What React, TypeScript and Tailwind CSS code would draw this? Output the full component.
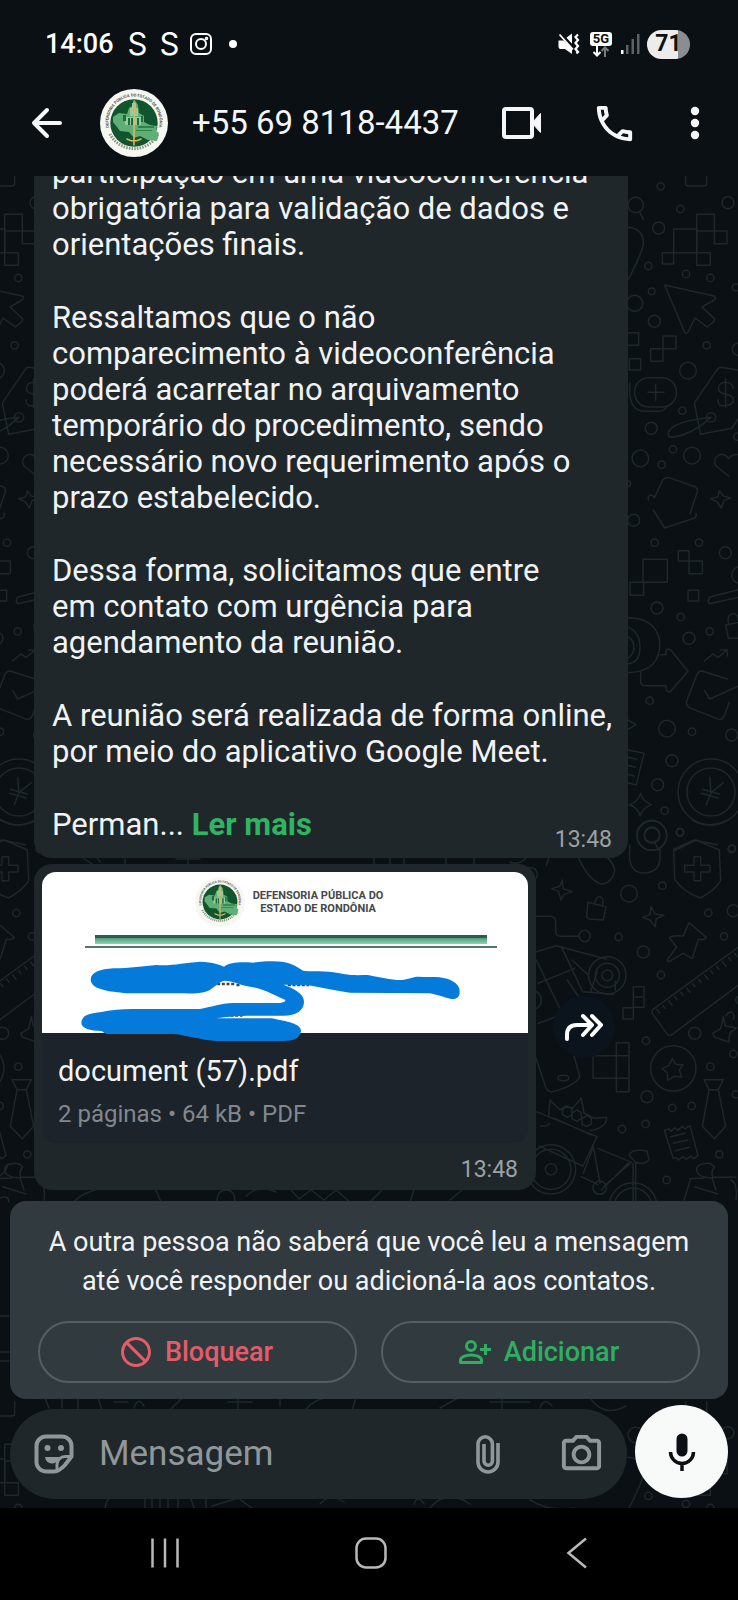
import React, { useId } from "react";
import { MdBlock, MdOutlineCall, MdOutlinePhotoCamera } from "react-icons/md";

const paragraphs: string[][] = [
  ["participação em uma videoconferência", "obrigatória para validação de dados e", "orientações finais."],
  [
    "Ressaltamos que o não",
    "comparecimento à videoconferência",
    "poderá acarretar no arquivamento",
    "temporário do procedimento, sendo",
    "necessário novo requerimento após o",
    "prazo estabelecido.",
  ],
  ["Dessa forma, solicitamos que entre", "em contato com urgência para", "agendamento da reunião."],
  ["A reunião será realizada de forma online,", "por meio do aplicativo Google Meet."],
];

type Dot = [number, number, number];

const upperDots: Dot[] = [
  [182, 49, 11], [107, 105, 23], [241, 117, 11], [384, 98, 18], [176, 174, 18], [145, 288, 11],
  [258, 312, 11], [331, 324, 11], [155, 364, 10], [104, 400, 24], [163, 454, 18], [320, 526, 11],
  [264, 602, 25], [408, 352, 11], [415, 538, 18], [247, 722, 11], [154, 775, 18], [121, 865, 25],
  [219, 838, 11], [276, 857, 25], [185, 884, 11], [84, 941, 8], [412, 800, 11], [333, 742, 14],
];

const middleDots: Dot[] = [
  [101, 31, 18], [164, 98, 11], [297, 98, 11], [376, 128, 18], [420, 195, 25], [171, 294, 18],
  [242, 321, 11], [267, 385, 18], [329, 364, 11], [149, 572, 11], [201, 656, 25], [276, 665, 11],
  [395, 675, 18], [216, 752, 18], [173, 824, 18], [194, 902, 11], [240, 966, 11], [333, 846, 99],
  [333, 846, 72], [155, 976, 45], [156, 974, 23], [396, 1015, 10],
];

const lowerDots: Dot[] = [
  [936, 37, 11], [1091, 87, 11], [883, 197, 11], [783, 221, 25], [1021, 279, 11], [1096, 272, 18],
  [650, 348, 17], [752, 351, 11], [1068, 349, 11], [826, 396, 18], [879, 465, 11], [718, 466, 56],
  [718, 466, 36], [718, 466, 16], [980, 640, 18], [834, 662, 11], [1096, 702, 11], [916, 745, 68],
  [1027, 740, 11], [837, 830, 18], [913, 864, 11], [971, 858, 11], [833, 912, 11], [762, 927, 11],
  [1054, 1003, 11], [896, 1080, 11], [1104, 823, 11], [549, 1048, 74], [549, 1048, 60], [549, 1048, 17],
  [695, 1103, 20], [795, 1160, 72], [795, 1160, 56], [490, 540, 30], [488, 163, 20],
];

function Dots({ items }: { items: Dot[] }) {
  return (
    <>
      {items.map(([cx, cy, r]) => (
        <circle key={`${cx}-${cy}-${r}`} cx={cx} cy={cy} r={r} />
      ))}
    </>
  );
}

function DoodleColumn() {
  return (
    <>
      <g transform="translate(600 -6) scale(0.33333)">
        <Dots items={upperDots} />
        <path d="M257 5v35q0 8 8 8h47q8 0 8-8V5M120 128l10 20" />
        <path d="M221 177h70v71h-70zM290 133h53v50h-53zM343 183h38v38h-38zM187 248h34v34h-34zM290 183v103h41v-38h-41" />
        <path d="M84 172q48 5 46 50q-5 30-46 108" />
        <path d="M194 345L345 379q4 5-3 11l-36 21 37 35q3 5-3 10l-18 15-37-27-22 45q-4 3-8 0z" />
        <path d="M80 488h36v38H80zM88 566h34v34H88zM189 498h39v38h-39zM152 536h37v38h-37z" />
        <rect x="104" y="623" width="125" height="88" rx="42" />
        <path d="M90 640q-8 84 45 84h40q18 0 27-16M144 667h48M167 643v48" />
        <path d="M414 600l-50-8q-8 0-12 6l-66 96q-3 5-2 10l18 89 94-18 18-28M333 742Q215 755 205 788q-2 14 12 14q60-8 116-60" />
        <path d="M400 655q-4-18-23-18t-22 18q0 14 22 18t23 17-23 17-23-18M377 626v86" />
        <path d="M386 918L348 888q-8-12 0-26 19-20 38 4 10-14 28-12M145 990q-2-12 6-14 10-2 12 8l26-55q8-8 18-6l80 28q6 4 5 14l-22 66M358 962l12 16 22 6-20 8-8 22-12-18-20-10 22-6z" />
      </g>
      <g transform="translate(600 334) scale(0.33333)">
        <Dots items={middleDots} />
        <path d="M160 0l34 54 90-30q8-8 4-14M129 148h73v69h-73zM90 217h41v39H90zM235 122h32v31h-32zM267 153h40v38h-40zM264 241h32v32h-32z" />
        <path d="M420 238l-90 23q-9 8-2 20l92-20M385 338q-4-24 12-27t17 20M377 345l40-8M377 345l8 40h35" />
        <path d="M80 323q84-2 99 68 6 96-99 97M80 350q40 14 40 62t-40 50M80 378q22 12 22 34t-22 36" />
        <path d="M122 485v32q2 10 12 10h64v10q6 12 14 7l52-60-52-64q-8-6-14 2v12h-18" />
        <path d="M313 453l26-21 15 10 28-22M362 420h20v18M382 507l-76-24q-10 0-16 12l-31 82q2 14 14 18l85 34q12-2 16-14l14-38M314 542l15 25 90-40" />
        <path d="M84 720l48 10-23 94-29-6M84 742l26 6M80 766l26 6M78 792l24 6M84 630l24 14-24 14" />
        <path d="M329 802l4 46-14 36M370 818l-37 30M308 838l50 14M304 850l50 14M122 850q6 24 32 34-26 10-34 34-6-26-32-34 28-10 34-34M165 1000l12 20M220 1018l62-28 70 14" />
      </g>
      <g transform="translate(368 644) scale(0.33333)">
        <Dots items={lowerDots} />
        <circle cx="852" cy="47" r="44" />
        <circle cx="852" cy="47" r="23" />
        <path d="M785 75v42q5 44 48 42 44-5 43-48V84M630 110q30 70 70 82 36-4 40-44-8-28-30-40M545 108l-10 28M973 0q50 30 105 0" />
        <path d="M917 93l67-33 70 30 4 92q-14 26-60 52-50-16-78-56z" />
        <path d="M978 110h20v26h28v20h-28v26h-20v-26h-28v-20h28z" />
        <path d="M583 180l2 26 28 9-26 9-8 16-8-26-20-8 24-7zM849 260l12 22 27 4-23 10-4 24-15-20-22-8 22-8z" />
        <path d="M660 247l54 13-8 40-42-3q-10-3-8-12zM680 252q4-26 16-22 12 2 8 28" />
        <path d="M505 289h40q18 0 18 18v26q0 16 16 16h54M505 395l60-18 150 40M580 380l64 135 92 8M505 420l80 165 50 185q-10 26-84 46-14-2-18-14l-30-90M510 490l110-45M510 610q62-20 92-40h38M598 480l40 60M668 515l20-60M742 512v-28M612 420l50 46" />
        <path d="M963 308l52 44q-4 10-24 6l-18 58-28-16-40 24q-8 2-6-6l27-37-22-28q6-8 42-5z" />
        <path d="M1120 375L855 568q-6 8 0 16l44 60q8 4 14-1l207-154M866 568l9 11M884 556l7 9M902 543l10 13M920 530l7 9M938 517l7 9M956 504l10 13M974 491l7 9M992 478l7 9M1010 465l10 13M1028 452l7 9M1046 439l7 9M1064 426l10 13M1082 413l7 9M1100 400l7 9" />
        <path d="M796 500h32v62h-32zM796 531h32M765 563h31v34h-31zM675 707h108v68H675zM745 668h38v147h-38z" />
        <path d="M1066 590l6 28 34 6-20 14-4 28-42-14-6-12 24-14zM1074 588q8-16 20-10 8 8 2 20M1108 530l-6 10 8 12" />
        <path d="M913 716l10 17 22 1-11 16 7 22-22-3-20 12-1-22-16-14 20-8z" />
        <path d="M1008 779h58l-15 30h-28zM1023 809l-20 110 36 37 34-37-22-110" />
        <path d="M889 931l14-4 6 7 12-11 8 8 14-12 8 8 15-10 24 90-13 9-8-8-15 10-8-8-16 10-6-8-8 4zM908 950l44-10M916 970l44-10M922 992l42-10" />
        <ellipse cx="586" cy="774" rx="16" ry="8" />
        <path d="M505 875l182 75-42 88-132-60M560 895l110 50M546 840l-4 46M546 840l30 30 18-12 18 8 28-32 8 45 32 16 36-3q2 30-50 40M584 868l14-10 14 8v18l-14 8-14-8zM612 880l14-10 14 8v18l-14 8-14-8zM642 896l14-10 14 8v18l-14 8-14-8z" />
        <path d="M676 980l20 110M690 985l100 42-80 70M640 1070l50 24M676 980l-30 80M795 1030v130M803 1030v130M783 1005q10-20 54-12l6 26q-14 16-40 8zM545 910q-4 10-28 8M700 1110l80-80" />
        <path d="M1104 1072h-70q-6-22 6-30-14-18-34-10-22 2-20 20 2 14 26 20l20 2 12 36M1008 1074l-40 2-20 64M980 1100l70 22M1088 1080q22 8 16 60" />
      </g>
    </>
  );
}

function Wallpaper() {
  return (
    <svg
      aria-hidden="true"
      className="absolute inset-0 h-full w-full"
      fill="none"
      stroke="#1f272b"
      strokeWidth="4.5"
      strokeLinecap="round"
      strokeLinejoin="round"
    >
      <defs>
        <g id="doodles">
          <DoodleColumn />
        </g>
      </defs>
      <use href="#doodles" />
      <use href="#doodles" x="-692" />
      <use href="#doodles" y="1230" />
      <use href="#doodles" x="-692" y="1230" />
      <g strokeWidth="1.5">
        <path d="M80 680l12 8M96 680l4 6M125 680v8M176 683h24M188 680v8M374 680v8M390 680v8M404 680v8M446 680v8M474 680v8M510 686q8 4 16-4" />
        <path d="M74 1026q8-10 30-14M155 1012l6 14M217 1026q0-12 9-12t9 12M246 1020q12-12 30-4M291 1014l8 9 12-9 13 10 12-10 14 12M370 1026l12-12M410 1026l4-12M450 1024l12-10" />
        <path d="M45 1222l4 10M62 1222v10M78 1222v12M98 1222l4 12M114 1226h14M134 1232q4-12 10-2M170 1234l12-12M228 1226h24M238 1222v12M280 1222v8M305 1234q12-14 28-12M352 1234l4-12M440 1232l18-10M490 1226h40M502 1222v12M540 1232q4-12 12-2M590 1222q14 20 36 8" />
        <path d="M105 1332q2-16 20-12M145 1322v10M152 1320v12M160 1320v12M168 1322v10M178 1320v12M190 1320l4 12M206 1322v10M212 1330l26-8 14 10M320 1328q10-12 24-2M414 1328q4-10 10 0M430 1332q16-20 40-4M530 1324q20 12 44 8" />
        <path d="M0 1022q8-4 9 4M0 1140h9M0 1176h9M0 1185h9M0 1000q6-4 8-12" />
      </g>
    </svg>
  );
}

function Seal({ className }: { className: string }) {
  const arcId = useId();
  return (
    <svg viewBox="0 0 68 68" className={className} role="img" aria-label="Defensoria Pública do Estado de Rondônia">
      <defs>
        <path id={arcId} d="M9.5 40A25.5 25.5 0 1 1 58.500 40" />
      </defs>
      <circle cx="34" cy="34" r="34" fill="#f7f7f1" />
      <text fontSize="4" fontWeight="700" fill="#4b5148" fontFamily="Roboto, sans-serif">
        <textPath href={`#${arcId}`} startOffset="50%" textAnchor="middle">
          DEFENSORIA PÚBLICA DO ESTADO DE RONDÔNIA
        </textPath>
      </text>
      <path d="M10 45A27 27 0 0 0 58 45" fill="none" stroke="#8b9480" strokeWidth="3" strokeDasharray="1.500 1.200" />
      <circle cx="34" cy="34" r="23.700" fill="#10552d" />
      <path d="M13 28l6-4 8 1 2-6 3-2 2-7 4 6 1 8 5 3v6l6 3 7 1-1 5 3 2-2 8-9-1-8-4-6 2-5-6-9-1-3-4-4-5z" fill="#5fae76" />
      <path d="M25 28h16v8H25zM30 19h8v8h-8zM32 14h4v5h-4z" fill="#93cca0" />
      <path d="M23 26h3v6h-3zM28 29h2v7h-2zM31 29h2v7h-2zM37 29h2v7h-2zM41 27h2v6h-2z" fill="#1f6b3c" />
      <path d="M38 37h16v2H38zM36 41h16v1H36z" fill="#2e834b" />
      <path d="M34 13v43M27 50q7 4 14 0M31 22h6" fill="none" stroke="#d9b565" strokeWidth="1.600" strokeLinecap="round" />
    </svg>
  );
}

function StatusBar() {
  return (
    <div className="flex h-[88px] items-center justify-between pl-[45px] pr-12 text-white">
      <div className="flex items-center">
        <span className="text-[27px] font-medium leading-8">14:06</span>
        <span className="ml-[14px] font-[Inter,sans-serif] text-[31px] leading-8">S</span>
        <span className="ml-3 font-[Inter,sans-serif] text-[31px] leading-8">S</span>
        <svg viewBox="0 0 24 24" className="ml-[10px] size-6" fill="none" stroke="currentColor" strokeWidth="2">
          <rect x="2" y="2" width="20" height="20" rx="5" />
          <circle cx="12" cy="12" r="5" />
          <circle cx="17.500" cy="6.500" r="0.800" />
        </svg>
        <span className="ml-4 size-2 rounded-full bg-white" />
      </div>
      <div className="flex items-center">
        <svg viewBox="0 0 22 22" className="size-[22px]" fill="currentColor">
          <path d="M0.500 7.500h5L14 14.500V21l-7-5H2.500Q.5 16 .5 13zM8 5l6-4.500V11z" />
          <path d="M3 0l14 16" stroke="#0a1014" strokeWidth="2" />
          <path d="M1.500 1.500L15 16.500" stroke="currentColor" strokeWidth="1.800" />
          <path d="M20 1.500l-2.500 2.500 2.500 3-2.500 3 2.500 3-2.500 3 2.500 3-1.500 1.500" fill="none" stroke="currentColor" strokeWidth="2.200" />
        </svg>
        <div className="ml-[10px] flex flex-col items-center">
          <span className="rounded-[3px] bg-white px-[3px] text-[13px] font-bold leading-[14px] text-[#0a1014]">5G</span>
          <svg viewBox="0 0 18 11" className="h-[11px] w-[18px]" fill="none" strokeWidth="2">
            <path d="M5 0v9M1.500 6L5 9.500 8.500 6" stroke="#fff" />
            <path d="M13 11V2M9.500 5L13 1.500 16.500 5" stroke="#777b7d" />
          </svg>
        </div>
        <svg viewBox="0 0 20 20" className="ml-2 size-5">
          <path d="M1 16h2.500v4H1z" fill="#fff" />
          <path d="M6 11h2.500v9H6zM11.500 5H14v15h-2.500zM17 0h2.500v20H17z" fill="#5d6265" />
        </svg>
        <div className="ml-[7px] flex h-[29px] w-[43px] items-center justify-center rounded-full bg-linear-to-r from-[#ececec] from-71% to-[#8b8e90] to-71% text-[23px] font-bold leading-7 text-[#0a1014]">
          71
        </div>
      </div>
    </div>
  );
}

function ChatHeader() {
  return (
    <div className="flex h-[88px] items-start pl-[30px] pr-[38px] text-[#f4f6f7]">
      <button type="button" aria-label="Voltar" className="flex h-[70px] w-[34px] items-center">
        <svg viewBox="0 0 34 34" className="size-[34px]" fill="none" stroke="currentColor" strokeWidth="4" strokeLinecap="round" strokeLinejoin="round">
          <path d="M30 17H4M17 4L4 17l13 13" />
        </svg>
      </button>
      <Seal className="ml-9 mt-px size-[68px] shrink-0" />
      <h1 className="ml-6 flex h-[70px] flex-1 items-center whitespace-nowrap text-[33px] font-normal leading-10">
        +55 69 8118-4437
      </h1>
      <div className="flex h-[70px] items-center">
        <button type="button" aria-label="Chamada de vídeo">
          <svg viewBox="0 0 40 32" className="h-8 w-10" fill="none" stroke="currentColor" strokeWidth="4" strokeLinejoin="round">
            <rect x="2" y="2" width="28" height="28" rx="2" />
            <path d="M30 16l8.500-9.500v19z" fill="currentColor" strokeWidth="1" />
          </svg>
        </button>
        <button type="button" aria-label="Ligar" className="ml-[49px]">
          <MdOutlineCall className="size-[47px]" />
        </button>
        <button type="button" aria-label="Mais opções" className="ml-[52px]">
          <svg viewBox="0 0 10 34" className="h-[34px] w-[10px]" fill="currentColor">
            <circle cx="5" cy="5" r="4.200" />
            <circle cx="5" cy="17" r="4.200" />
            <circle cx="5" cy="29" r="4.200" />
          </svg>
        </button>
      </div>
    </div>
  );
}

function TextMessage() {
  return (
    <article className="w-[594px] max-w-full rounded-[18px] bg-[#20272a] pb-[15px] pl-[18px] pr-4 pt-2 text-[31px] leading-9 text-[#f1f3f4]">
      {paragraphs.map((lines) => (
        <p key={lines[0]} className="mb-[37px] whitespace-nowrap">
          {lines.map((line) => (
            <span key={line} className="block">
              {line}
            </span>
          ))}
        </p>
      ))}
      <div className="flex items-end justify-between">
        <p>
          Perman...{" "}
          <a href="#mais" className="font-bold text-[#2eb564]">
            Ler mais
          </a>
        </p>
        <time className="-mb-[11px] text-[23px] leading-7 text-[#9ba1a4]">13:48</time>
      </div>
    </article>
  );
}

function DocumentMessage() {
  return (
    <article className="w-[502px] rounded-[18px] bg-[#20272a] px-2 pb-1 pt-2">
      <div className="overflow-hidden rounded-[14px] bg-[#1c232a]">
        <div className="relative h-[161px] bg-white">
          <div className="flex items-center justify-center gap-2 pl-2 pt-[5px]">
            <Seal className="size-[50px]" />
            <p className="text-center text-[11px] font-bold leading-[13px] text-[#45484a]">
              DEFENSORIA PÚBLICA DO
              <br />
              ESTADO DE RONDÔNIA
            </p>
          </div>
          <div className="ml-[43px] mr-[31px] mt-2 border-b-2 border-[#54736b] px-[10px] pb-[2px]">
            <div className="h-[9px] border-t-[3px] border-[#2c5b4b] bg-linear-to-b from-[#4f9d7b] to-[#8fd3b2]" />
          </div>
          <svg viewBox="126 36 1455 483" className="absolute inset-0 h-full w-full overflow-visible" aria-hidden="true">
            <path d="M650 372h56M708 375h10M862 375h64M690 466h36" stroke="#4b3f3a" strokeWidth="8" strokeDasharray="9 5" />
          </svg>
        </div>
        <div className="flex h-[110px] flex-col pl-4 pt-5">
          <h2 className="text-[29px] font-normal leading-9 text-[#f1f3f4]">document (57).pdf</h2>
          <p className="mt-[11px] text-[24px] leading-7 text-[#82888c]">2 páginas • 64 kB • PDF</p>
        </div>
      </div>
      <div className="flex justify-end pr-[10px] pt-[11px]">
        <time className="text-[23px] leading-8 text-[#9ba1a4]">13:48</time>
      </div>
    </article>
  );
}

function Scribble() {
  return (
    <svg viewBox="126 36 1455 483" className="pointer-events-none absolute left-2 top-2 h-[161px] w-[485px] overflow-visible" aria-hidden="true">
      <path
        fill="#047bdb"
        fillRule="nonzero"
        d="M272 358C275 335 300 328 340 325C390 325 430 318 470 315C520 318 550 308 600 305C640 306 660 315 672 320C690 306 720 306 760 308C800 303 850 300 880 315C900 325 905 332 915 333C950 335 990 332 1030 342C1060 347 1080 345 1104 345C1140 352 1170 360 1204 360C1225 358 1238 350 1254 350C1280 351 1300 350 1319 352C1350 356 1380 370 1379 395C1379 410 1370 418 1354 417C1330 412 1310 402 1284 400L1050 398C1000 392 960 380 920 376L850 374C880 385 912 400 912 425C912 450 890 467 850 467H740C700 468 665 472 650 475H815C860 485 903 490 903 513C900 535 880 543 850 543H650C600 540 560 525 520 522H320C310 518 308 515 305 513C270 512 244 505 244 488C246 465 270 460 300 457C340 447 380 446 420 447H600C640 440 660 430 700 429H840C850 428 857 425 856 420C830 410 790 385 750 380C720 376 700 362 672 362C650 370 640 385 625 392C600 402 570 400 540 400H380C330 395 272 390 272 358Z"
      />
    </svg>
  );
}

function ContactNotice() {
  return (
    <section className="rounded-[16px] bg-[#313a3f] px-7 pb-4 pt-[22px]">
      <p className="whitespace-nowrap text-center text-[27px] leading-[39px] text-[#f1f3f4]">
        A outra pessoa não saberá que você leu a mensagem
        <br />
        até você responder ou adicioná-la aos contatos.
      </p>
      <div className="mt-5 grid grid-cols-2 gap-6">
        <button type="button" className="flex h-[62px] items-center justify-center gap-[11px] rounded-full border-2 border-[#555e63] pr-1 text-[27px] font-medium text-[#e55c69]">
          <MdBlock className="size-9 -scale-x-100" />
          Bloquear
        </button>
        <button type="button" className="flex h-[62px] items-center justify-center gap-3 rounded-full border-2 border-[#555e63] pr-1 text-[27px] font-medium text-[#2fae62]">
          <svg viewBox="0 0 34 24" className="h-6 w-[34px]" fill="none" stroke="currentColor" strokeWidth="3">
            <circle cx="13" cy="6" r="4.500" />
            <path d="M2.500 22.500V20C2.500 17 8 15 13 15s10.500 2 10.500 5v2.500z" strokeLinejoin="round" />
            <path d="M27.500 4v11M22 9.500h11" />
          </svg>
          Adicionar
        </button>
      </div>
    </section>
  );
}

function Composer() {
  return (
    <form className="flex items-start gap-2" onSubmit={(event) => event.preventDefault()}>
      <div className="mt-1 flex h-[90px] min-w-0 flex-1 items-center rounded-full bg-[#20272a] pl-6 pr-[22px] text-[#8f979a]">
        <button type="button" aria-label="Figurinhas">
          <svg viewBox="0 0 40 40" className="size-10" fill="none" stroke="currentColor" strokeWidth="4" strokeLinejoin="round">
            <path d="M12 2.500h16A9.500 9.500 0 0 1 37.500 12v10.500L31 31Q25 37.500 20 37.500H12A9.500 9.500 0 0 1 2.500 28.500V12A9.500 9.500 0 0 1 12 2.500z" />
            <path d="M37 22.500h-6a8 8 0 0 0-8 8V37" strokeWidth="3" />
            <circle cx="13.500" cy="14" r="3" fill="currentColor" stroke="none" />
            <circle cx="27" cy="14" r="3" fill="currentColor" stroke="none" />
            <path d="M11 23h14q-2 7-7 6.500-6-.5-7-6.500z" fill="currentColor" stroke="none" />
          </svg>
        </button>
        <input
          type="text"
          aria-label="Mensagem"
          placeholder="Mensagem"
          className="ml-[25px] min-w-0 flex-1 bg-transparent text-[35px] leading-10 outline-none placeholder:text-[#8f979a]"
        />
        <button type="button" aria-label="Anexar">
          <svg viewBox="0 0 26 40" className="h-10 w-[26px]" fill="none" stroke="currentColor" strokeWidth="3.600">
            <path d="M23 9v19a10 10 0 0 1-20 0V10a7.200 7.200 0 0 1 14.400 0v17a4.200 4.200 0 0 1-8.400 0V10" />
          </svg>
        </button>
        <button type="button" aria-label="Câmera" className="ml-[57px]">
          <MdOutlinePhotoCamera className="size-[47px]" />
        </button>
      </div>
      <button type="button" aria-label="Gravar áudio" className="flex size-[93px] shrink-0 items-center justify-center rounded-full bg-[#f8f9f9] text-[#0a1014]">
        <svg viewBox="0 0 28 38" className="h-[38px] w-7" fill="none" stroke="currentColor" strokeWidth="3.500">
          <rect x="8.500" y="0.500" width="11" height="23" rx="5.500" fill="currentColor" stroke="none" />
          <path d="M2.500 19a11.500 11.500 0 0 0 23 0M14 30v8" />
        </svg>
      </button>
    </form>
  );
}

function SystemNavigation() {
  return (
    <nav className="grid h-[92px] shrink-0 grid-cols-3 items-start justify-items-center bg-black pl-[62px] pr-[58px] pt-[29px] text-[#b9b9b9]">
      <button type="button" aria-label="Recentes">
        <svg viewBox="0 0 32 32" className="size-8" fill="none" stroke="currentColor" strokeWidth="2.500">
          <path d="M3.500 1.500v29M16 1.500v29M28.500 1.500v29" />
        </svg>
      </button>
      <button type="button" aria-label="Início">
        <svg viewBox="0 0 32 32" className="size-8" fill="none" stroke="currentColor" strokeWidth="2.500">
          <rect x="1.500" y="1.500" width="29" height="29" rx="9.500" />
        </svg>
      </button>
      <button type="button" aria-label="Voltar">
        <svg viewBox="0 0 32 32" className="size-8" fill="none" stroke="currentColor" strokeWidth="2.500">
          <path d="M25 1.500L7.500 16 25 30.500" />
        </svg>
      </button>
    </nav>
  );
}

export default function App() {
  return (
    <div className="flex h-screen flex-col overflow-hidden bg-[#0a1014] font-[Roboto,sans-serif]">
      <header className="relative z-10 shrink-0 bg-[#0a1014]">
        <StatusBar />
        <ChatHeader />
      </header>
      <main className="relative flex min-h-0 flex-1 flex-col justify-end overflow-hidden">
        <Wallpaper />
        <div className="relative flex flex-col px-[10px] pb-[9px]">
          <div className="flex flex-col gap-[6px] pl-6">
            <TextMessage />
            <div className="flex items-center gap-[17px]">
              <div className="relative">
                <DocumentMessage />
                <Scribble />
              </div>
              <button type="button" aria-label="Encaminhar" className="flex size-[62px] items-center justify-center rounded-full bg-[#0b141c] text-white">
                <svg viewBox="0 0 40 28" className="h-7 w-10" fill="none" stroke="currentColor" strokeWidth="4" strokeLinejoin="round" strokeLinecap="round">
                  <path d="M3 26v-4q0-10 10-10h14M19 3l9 9-9 10M28 3l9 9-9 10" />
                </svg>
              </button>
            </div>
          </div>
          <div className="mt-[11px]">
            <ContactNotice />
          </div>
          <div className="mt-[6px]">
            <Composer />
          </div>
        </div>
      </main>
      <SystemNavigation />
    </div>
  );
}
